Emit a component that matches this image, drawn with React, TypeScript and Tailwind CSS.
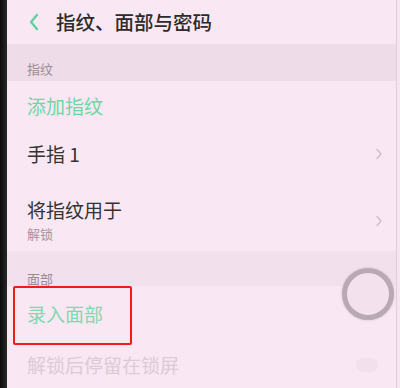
import React from "react";

const font = { fontFamily: '"Noto Sans CJK SC", "Noto Sans", sans-serif' };

function Chevron() {
  return (
    <svg width="8" height="12" viewBox="0 0 8 12" className="shrink-0">
      <path d="M2 1.5 L6 6 L2 10.5" fill="none" stroke="#cbbcc7" strokeWidth="1.3" strokeLinecap="round" strokeLinejoin="round" />
    </svg>
  );
}

export default function App() {
  return (
    <div className="w-[400px] h-[388px] overflow-hidden flex bg-[#f9e7f3] relative" style={font}>
      <div className="w-[7px] bg-gradient-to-r from-[#0c0c0c] to-[#2a2a2a] shrink-0" />
      <div className="flex-1 flex flex-col">
        <div className="h-[45px] flex items-center pl-[21px] gap-[16px]">
          <svg width="12" height="18" viewBox="0 0 12 18">
            <path d="M9 2 L3 9 L9 16" fill="none" stroke="#5fd29d" strokeWidth="2.4" strokeLinecap="round" strokeLinejoin="round" />
          </svg>
          <span className="text-[19.5px] text-[#2b2b2b] font-medium leading-none">指纹、面部与密码</span>
        </div>
        <div className="h-[38px] bg-[#efdce9] flex items-end pl-[20px] pb-[6px]">
          <span className="text-[13px] text-[#9a8c96] leading-none">指纹</span>
        </div>
        <div className="h-[50px] flex items-center pl-[20px]">
          <span className="text-[19px] text-[#6ed7a6] leading-none">添加指纹</span>
        </div>
        <div className="h-[50px] flex items-center justify-between pl-[20px] pr-[13px]">
          <span className="text-[19px] text-[#333] leading-none">手指 1</span>
          <Chevron />
        </div>
        <div className="h-[74px] flex items-start justify-between pl-[20px] pr-[13px] pt-[22px]">
          <div className="flex flex-col gap-[8px]">
            <span className="text-[19px] text-[#333] leading-none">将指纹用于</span>
            <span className="text-[13px] text-[#a2949e] leading-none">解锁</span>
          </div>
          <div className="mt-[15px]">
            <Chevron />
          </div>
        </div>
        <div className="h-[36px] bg-[#f2e0ec] flex items-end pl-[20px] pb-[1px]">
          <span className="text-[13px] text-[#9a8c96] leading-none">面部</span>
        </div>
        <div className="h-[57px] flex items-center pl-[20px]">
          <span className="text-[19px] text-[#7ed9ae] leading-none">录入面部</span>
        </div>
        <div className="h-[48px] flex items-center justify-between pl-[20px] pr-[18px]">
          <span className="text-[19px] text-[#dccbd6] leading-none">解锁后停留在锁屏</span>
          <div className="w-[22px] h-[14px] rounded-full bg-[#f2e0ec]" />
        </div>
      </div>
      <div className="w-[4px] border-l border-[#ddd0d9] bg-[#f6e4f0] shrink-0" />
      <div className="absolute left-[13px] top-[286px] w-[119px] h-[59px] border-2 border-[#ee1c1c] rounded-[2px]" />
      <div className="absolute left-[342px] top-[268px] w-[52px] h-[52px] rounded-full border-[5px] border-[#b9a9b5] bg-[#f3e2ee] shadow-[0_0_3px_rgba(0,0,0,0.15)]" />
    </div>
  );
}
